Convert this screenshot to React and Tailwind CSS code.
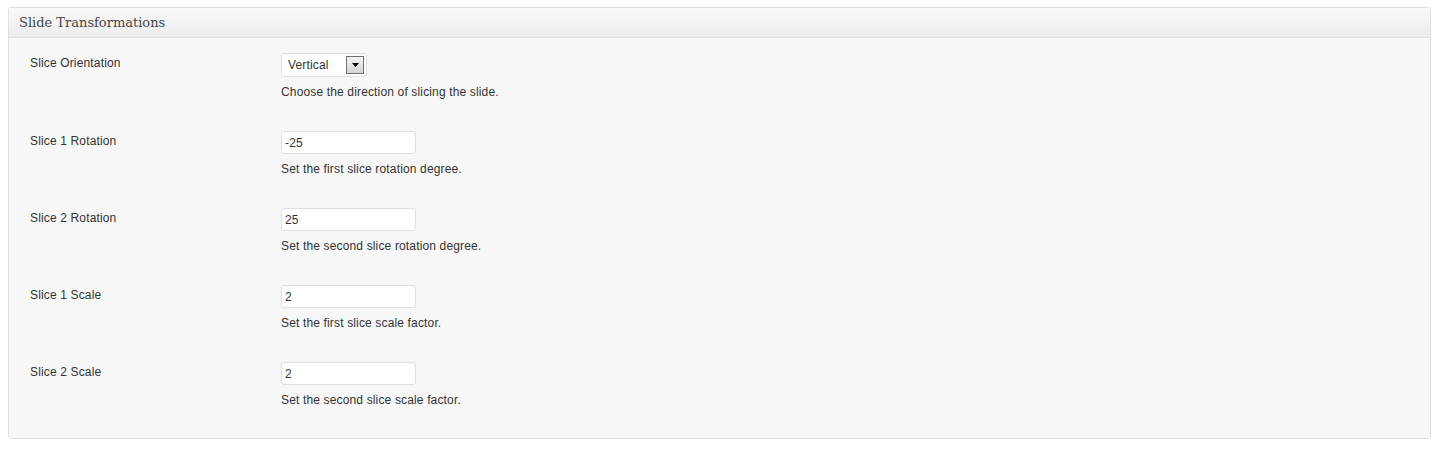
const fields = [
  { label: 'Slice Orientation', type: 'select', value: 'Vertical', help: 'Choose the direction of slicing the slide.' },
  { label: 'Slice 1 Rotation', value: '-25', help: 'Set the first slice rotation degree.' },
  { label: 'Slice 2 Rotation', value: '25', help: 'Set the second slice rotation degree.' },
  { label: 'Slice 1 Scale', value: '2', help: 'Set the first slice scale factor.' },
  { label: 'Slice 2 Scale', value: '2', help: 'Set the second slice scale factor.' },
];

function SelectBox({ value }) {
  return (
    <div className="flex h-[24px] w-[86px] items-center justify-between rounded-[3px] border border-[#dfdfdf] bg-white pl-[6px] pr-[2px]">
      <span className="text-[12px] text-[#333]">{value}</span>
      <span className="flex h-[18px] w-[18px] items-center justify-center border border-[#707070] bg-gradient-to-b from-[#f2f2f2] to-[#d4d4d4]">
        <svg width="7" height="4" viewBox="0 0 7 4"><path d="M0 0h7L3.5 4z" fill="#000" /></svg>
      </span>
    </div>
  );
}

export default function App() {
  return (
    <div className="min-h-[450px] bg-white pl-[8px] pr-[14px] pt-[7px]" style={{ fontFamily: '"Liberation Sans", Arial, sans-serif' }}>
      <div className="rounded-[3px] border border-[#dfdfdf] bg-[#f7f7f7]">
        {/* Header */}
        <div className="flex h-[30px] items-center border-b border-[#dfdfdf] bg-gradient-to-b from-[#f9f9f9] to-[#ececec] px-[10px]">
          <h3 className="text-[#464646]" style={{ fontFamily: '"DejaVu Serif", Georgia, serif', fontSize: '13px' }}>
            Slide Transformations
          </h3>
        </div>

        {/* Fields */}
        <div className="pl-[21px] pr-[20px] pt-[15px] tracking-[0.15px]">
          {fields.map((f, i) => (
            <div key={f.label} className="flex h-[77px]">
              <div className={`w-[251px] text-[12px] text-[#333] ${i === 0 ? 'pt-[1px]' : 'pt-[2px]'}`}>{f.label}</div>
              <div className="flex flex-col">
                {f.type === 'select' ? (
                  <SelectBox value={f.value} />
                ) : (
                  <input
                    readOnly
                    value={f.value}
                    className="mt-[1px] h-[23px] w-[135px] rounded-[3px] border border-[#dfdfdf] bg-white px-[3px] text-[12px] text-[#333] outline-none"
                  />
                )}
                <p className="mt-[6px] text-[12px] text-[#333]">{f.help}</p>
              </div>
            </div>
          ))}
        </div>
      </div>
    </div>
  );
}
